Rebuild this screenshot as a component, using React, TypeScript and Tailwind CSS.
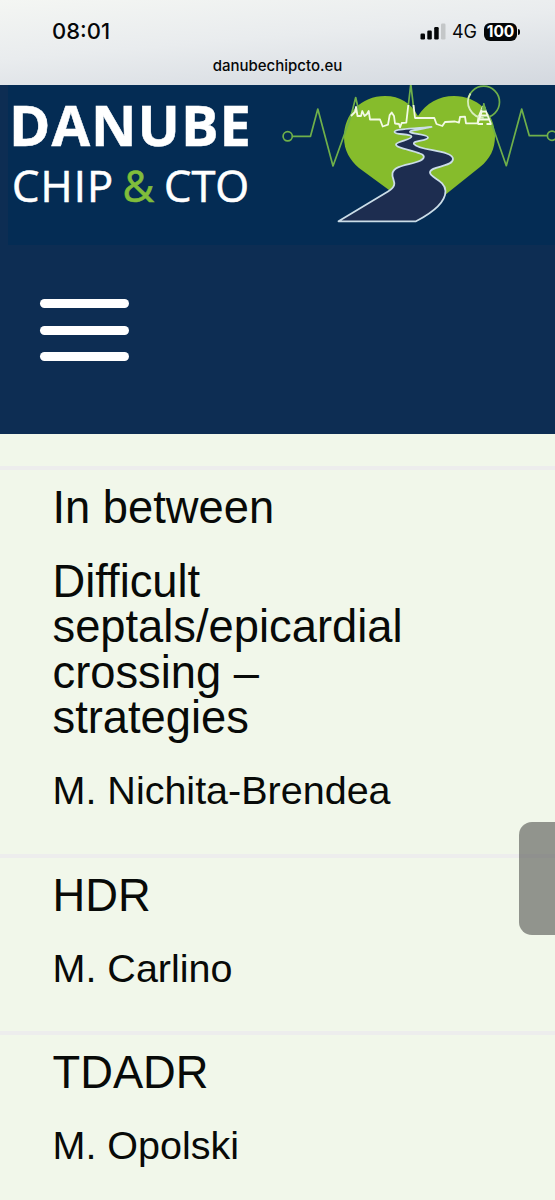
interface Talk {
  title: string;
  speaker: string;
}

interface Session {
  intro?: string;
  talk: Talk;
}

const sessions: Session[] = [
  {
    intro: 'In between',
    talk: {
      title: 'Difficult septals/epicardial crossing – strategies',
      speaker: 'M. Nichita-Brendea',
    },
  },
  { talk: { title: 'HDR', speaker: 'M. Carlino' } },
  { talk: { title: 'TDADR', speaker: 'M. Opolski' } },
];

function SignalIcon() {
  return (
    <svg className="w-[26px] h-[17px]" viewBox="0 0 26 17">
      <rect x="0.5" y="10.5" width="4.5" height="6" rx="1.2" fill="#050708" />
      <rect x="7.3" y="7.5" width="4.5" height="9" rx="1.2" fill="#050708" />
      <rect x="14.2" y="4" width="4.5" height="12.5" rx="1.2" fill="#050708" />
      <rect x="21" y="0.5" width="4.5" height="16" rx="1.2" fill="#c4c7c8" />
    </svg>
  );
}

function StatusBar() {
  return (
    <div className="h-[85px] bg-[linear-gradient(175deg,#f4f6f3_0%,#e9ecee_45%,#d3d8df_100%)] text-[#050708]">
      <div className="flex items-center h-[54px] pt-[9px] pl-[52px] pr-[35px] font-['Inter',sans-serif]">
        <span className="text-[22px] font-medium">08:01</span>
        <div className="ml-auto flex items-center">
          <SignalIcon />
          <span className="ml-[6px] text-[18px]">4G</span>
          <div className="ml-[7px] flex h-[18px] w-[33px] items-center justify-center rounded-[6px] bg-[#050708] text-[15.5px] font-bold text-white">
            100
          </div>
          <div className="ml-px h-[6px] w-[2px] rounded-r-full bg-[#050708]" />
        </div>
      </div>
      <p className="pt-[2px] text-center font-['Inter',sans-serif] text-[15px] leading-[20px] font-medium">
        danubechipcto.eu
      </p>
    </div>
  );
}

function HeartLogo() {
  return (
    <svg className="w-[280px] h-[160px] shrink-0" viewBox="275 85 280 160" fill="none" strokeLinejoin="round">
      {/* heart */}
      <path
        d="M418 116C411 103 400 96 385 96C361 96 344 114 344 137C344 151 350 160 359 168L389 190L416 214L445 195L480 167C490 159 495 149 495 136C495 113 477 96 454 96C439 96 426 103 418 116Z"
        fill="#86bc2c"
      />
      {/* pulse line */}
      <g stroke="#6fb04a" strokeWidth="1.7">
        <circle cx="287.7" cy="136.3" r="4.6" />
        <path d="M292.5 136.3H310.5L317.8 109L333 166L351 116L355.7 97.5L359 112" />
        <path d="M408 108L410.8 84L413.6 108" />
        <path d="M490 119L506.3 165.7L521.7 109L529.3 135.7H547.3" />
        <circle cx="552" cy="135.7" r="4.6" />
        <circle cx="483.7" cy="102" r="15.8" />
      </g>
      {/* skyline */}
      <g stroke="#f3fae6" strokeWidth="1.8">
        <path d="M351 116L355 112L356 107L357.5 116H361L362.3 111L364.5 116L367 114L368.7 111L370 119.5H380L382.7 126.5L388 124.7L389.7 115L391.7 112.5L394 116L395 123.5L399 124L400 127.3L401.7 123L406.3 122.7L408.3 105" />
        <path d="M413.5 105L415 118H434.3L436.5 124L442.3 126L445 122L455 121.5L459 122.7L460 117L465 116.7L466 123.3H477.5L478.5 117L483 106" />
        <path d="M470.5 93.5A15.8 15.8 0 0 0 483.7 117.8" stroke="#d9eebb" />
        <path d="M483.8 106L477.5 124M483.8 106L491 124M481.5 111.5H486.5M480 115.5H488.5M478.5 119.5H490M477.5 124H483M486.5 124H491.5" />
      </g>
      <path d="M483.8 103L482 110H486L483.8 103Z" fill="#6fb04a" stroke="#6fb04a" />
      {/* river */}
      <path
        d="M338.5 221.3L388 191.5C400 184 391 180 392.5 173C394.5 166 407 165 415 162.5C424 160 427 156 420 153.5C411 150 396 148 396 144.5C396 141 412 140 411.5 136.5C411 133.5 394.5 135 394.5 132C394.5 128.5 414 129 431.5 127C422 129.5 409 130 410 132C411 134 428 134 428 137.5C428 141 412 140.5 414 144C419 151 453 150 453 159C453 167 430 166 430 172.5C430 178 445 180 445.5 191C445.5 204 430 214 416 221.3Z"
        fill="#1d2d50"
        stroke="#cbdde8"
        strokeWidth="1.8"
      />
    </svg>
  );
}

function Header() {
  return (
    <header className="h-[349px] bg-[#0d2d53]">
      <div className="ml-[8px] flex h-[160px] bg-[#042c54]">
        <div className="w-[267px] shrink-0 font-['Open_Sans',sans-serif] whitespace-nowrap text-white">
          <div className="pt-[9px] pl-[1px] text-[56px] leading-[60px] font-bold tracking-[1px] [-webkit-text-stroke:0.5px]">
            DANUBE
          </div>
          <div className="flex pt-[2px] pl-[4px] text-[43.5px] leading-[60px] [-webkit-text-stroke:0.6px]">
            <span className="w-[110.5px] tracking-[1.1px]">CHIP</span>
            <span className="w-[41.5px] text-[#80bd3b]">&amp;</span>
            <span>CTO</span>
          </div>
        </div>
        <HeartLogo />
      </div>
      <button className="mt-[54px] ml-[40px] flex w-[89px] flex-col gap-[17.5px]" aria-label="Menu">
        <span className="h-[9px] w-full rounded-full bg-white" />
        <span className="h-[9px] w-full rounded-full bg-white" />
        <span className="h-[9px] w-full rounded-full bg-white" />
      </button>
    </header>
  );
}

export default function App() {
  return (
    <div className="relative h-[1200px] w-[555px] overflow-hidden bg-[#f1f7ea] font-['Liberation_Sans',sans-serif] text-[#080a08]">
      <StatusBar />
      <Header />
      <main className="pt-[32px]">
        {sessions.map(({ intro, talk }) => (
          <section
            key={talk.title}
            className="border-t-4 border-[#ededed] pt-[15px] pr-[100px] pb-[39.7px] pl-[52.5px] text-[45.3px] leading-[45.6px]"
          >
            {intro && <p className="mb-[28px]">{intro}</p>}
            <h2>{talk.title}</h2>
            <p className="mt-[27.5px] text-[39.5px]">{talk.speaker}</p>
          </section>
        ))}
      </main>
      {/* scroll handle floats over the list */}
      <div className="absolute top-[822px] right-0 h-[113px] w-[36px] rounded-l-[13px] bg-[#42433f]/55" />
    </div>
  );
}
